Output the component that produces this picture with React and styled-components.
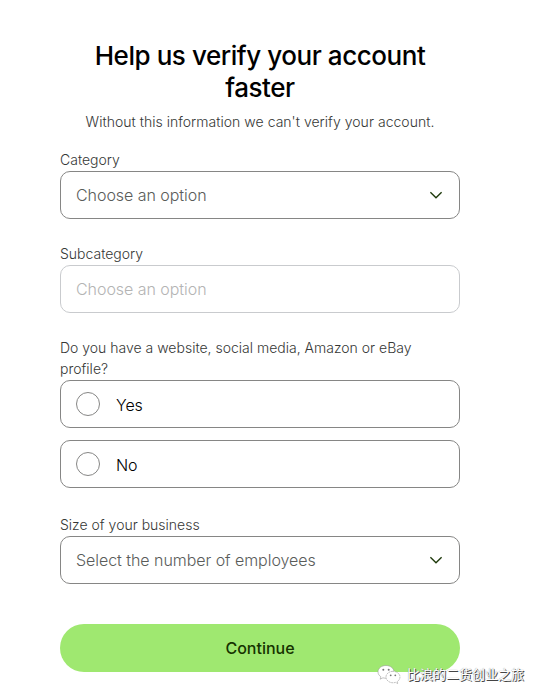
import styled, { createGlobalStyle } from "styled-components";

const GlobalStyle = createGlobalStyle`
  * {
    box-sizing: border-box;
  }
  body {
    margin: 0;
    background-color: #fff;
    font-family: Inter, "Liberation Sans", sans-serif;
    font-weight: 300;
    color: #0e0f0c;
  }
`;

const Page = styled.main`
  min-height: 700px;
  padding: 40px 0 0 60px;
`;

const Form = styled.form`
  width: 400px;
  display: flex;
  flex-direction: column;
`;

const Title = styled.h1`
  margin: 0;
  font-size: 26px;
  line-height: 32px;
  font-weight: 500;
  letter-spacing: -0.44px;
  text-align: center;
  color: #000;
`;

const Subtitle = styled.p`
  margin: 7px 0 17px;
  font-size: 14px;
  line-height: 21px;
  letter-spacing: 0.03px;
  text-align: center;
  color: #363836;
`;

const Field = styled.div`
  display: flex;
  flex-direction: column;
  margin-bottom: ${(props) => props.$gap || 24}px;
`;

const Label = styled.span`
  padding-bottom: 1px;
  font-size: 14px;
  line-height: 21px;
  color: #363836;
`;

const Box = styled.div`
  height: 48px;
  padding: 0 15px;
  display: flex;
  align-items: center;
  border: 1px solid ${(props) => (props.$disabled ? "#c9cbce" : "#868685")};
  border-radius: 10px;
  font-size: 16px;
  letter-spacing: -0.05px;
`;

const Select = styled(Box)`
  justify-content: space-between;
  color: ${(props) => (props.$disabled ? "#b4b4b4" : "#5a5c5a")};
`;

const Option = styled(Box)`
  gap: 16px;
  & + & {
    margin-top: 12px;
  }
`;

const OptionText = styled.span`
  padding-top: 2px;
  color: #000;
`;

const Radio = styled.span`
  width: 24px;
  height: 24px;
  border: 1px solid #868685;
  border-radius: 50%;
`;

const Button = styled.button`
  height: 48px;
  border: none;
  border-radius: 24px;
  background-color: #9fe870;
  color: #163300;
  font-family: inherit;
  font-size: 16px;
  font-weight: 500;
  cursor: pointer;
`;

const Watermark = styled.div`
  position: absolute;
  left: 377px;
  top: 663px;
  display: flex;
  align-items: center;
  gap: 6px;
  font-family: "Liberation Sans", "Noto Sans CJK SC", sans-serif;
  font-size: 13px;
  font-weight: 400;
  line-height: 24px;
  white-space: nowrap;
  color: #fff;
  text-shadow: 1px 1px 0 #444, 0 0 1px #888;
`;

const Chevron = () => (
  <svg width="16" height="16" viewBox="0 0 16 16" fill="none" stroke="#1f3a0c" strokeWidth="1.4">
    <path d="M2.4 5.3l5.6 5.4 5.6-5.4" />
  </svg>
);

const WeChat = () => (
  <svg width="24" height="22" viewBox="0 0 24 22" fill="#fff" stroke="#999" strokeWidth="0.6">
    <path d="M9 1.5C4.600 1.500 1 4.300 1 7.900c0 2 1.100 3.700 2.900 4.900L3.200 15.200l2.700-1.400c1 .3 2 .4 3.100.4 4.400 0 8-2.800 8-6.300S13.400 1.500 9 1.500z" />
    <path
      d="M16 7.300c-3.900 0-7 2.500-7 5.700s3.100 5.800 7 5.800c.9 0 1.800-.2 2.600-.4l2.300 1.300-.6-2.100c1.600-1.100 2.700-2.700 2.700-4.600 0-3.200-3.200-5.700-7-5.700z"
      strokeDasharray="2 0.6"
    />
    <g fill="#777" stroke="none">
      <circle cx="6.300" cy="5.700" r="1" />
      <circle cx="11.700" cy="5.700" r="1" />
      <circle cx="13.700" cy="11.300" r="0.900" />
      <circle cx="18.300" cy="11.300" r="0.900" />
    </g>
  </svg>
);

function App() {
  return (
    <Page>
      <GlobalStyle />
      <Form>
        <Title>Help us verify your account faster</Title>
        <Subtitle>Without this information we can't verify your account.</Subtitle>
        <Field>
          <Label>Category</Label>
          <Select>
            Choose an option
            <Chevron />
          </Select>
        </Field>
        <Field>
          <Label>Subcategory</Label>
          <Select $disabled>Choose an option</Select>
        </Field>
        <Field $gap={26}>
          <Label>Do you have a website, social media, Amazon or eBay profile?</Label>
          <Option>
            <Radio />
            <OptionText>Yes</OptionText>
          </Option>
          <Option>
            <Radio />
            <OptionText>No</OptionText>
          </Option>
        </Field>
        <Field $gap={40}>
          <Label>Size of your business</Label>
          <Select>
            Select the number of employees
            <Chevron />
          </Select>
        </Field>
        <Button type="button">Continue</Button>
      </Form>
      <Watermark>
        <WeChat />
        比浪的二货创业之旅
      </Watermark>
    </Page>
  );
}

export default App;
